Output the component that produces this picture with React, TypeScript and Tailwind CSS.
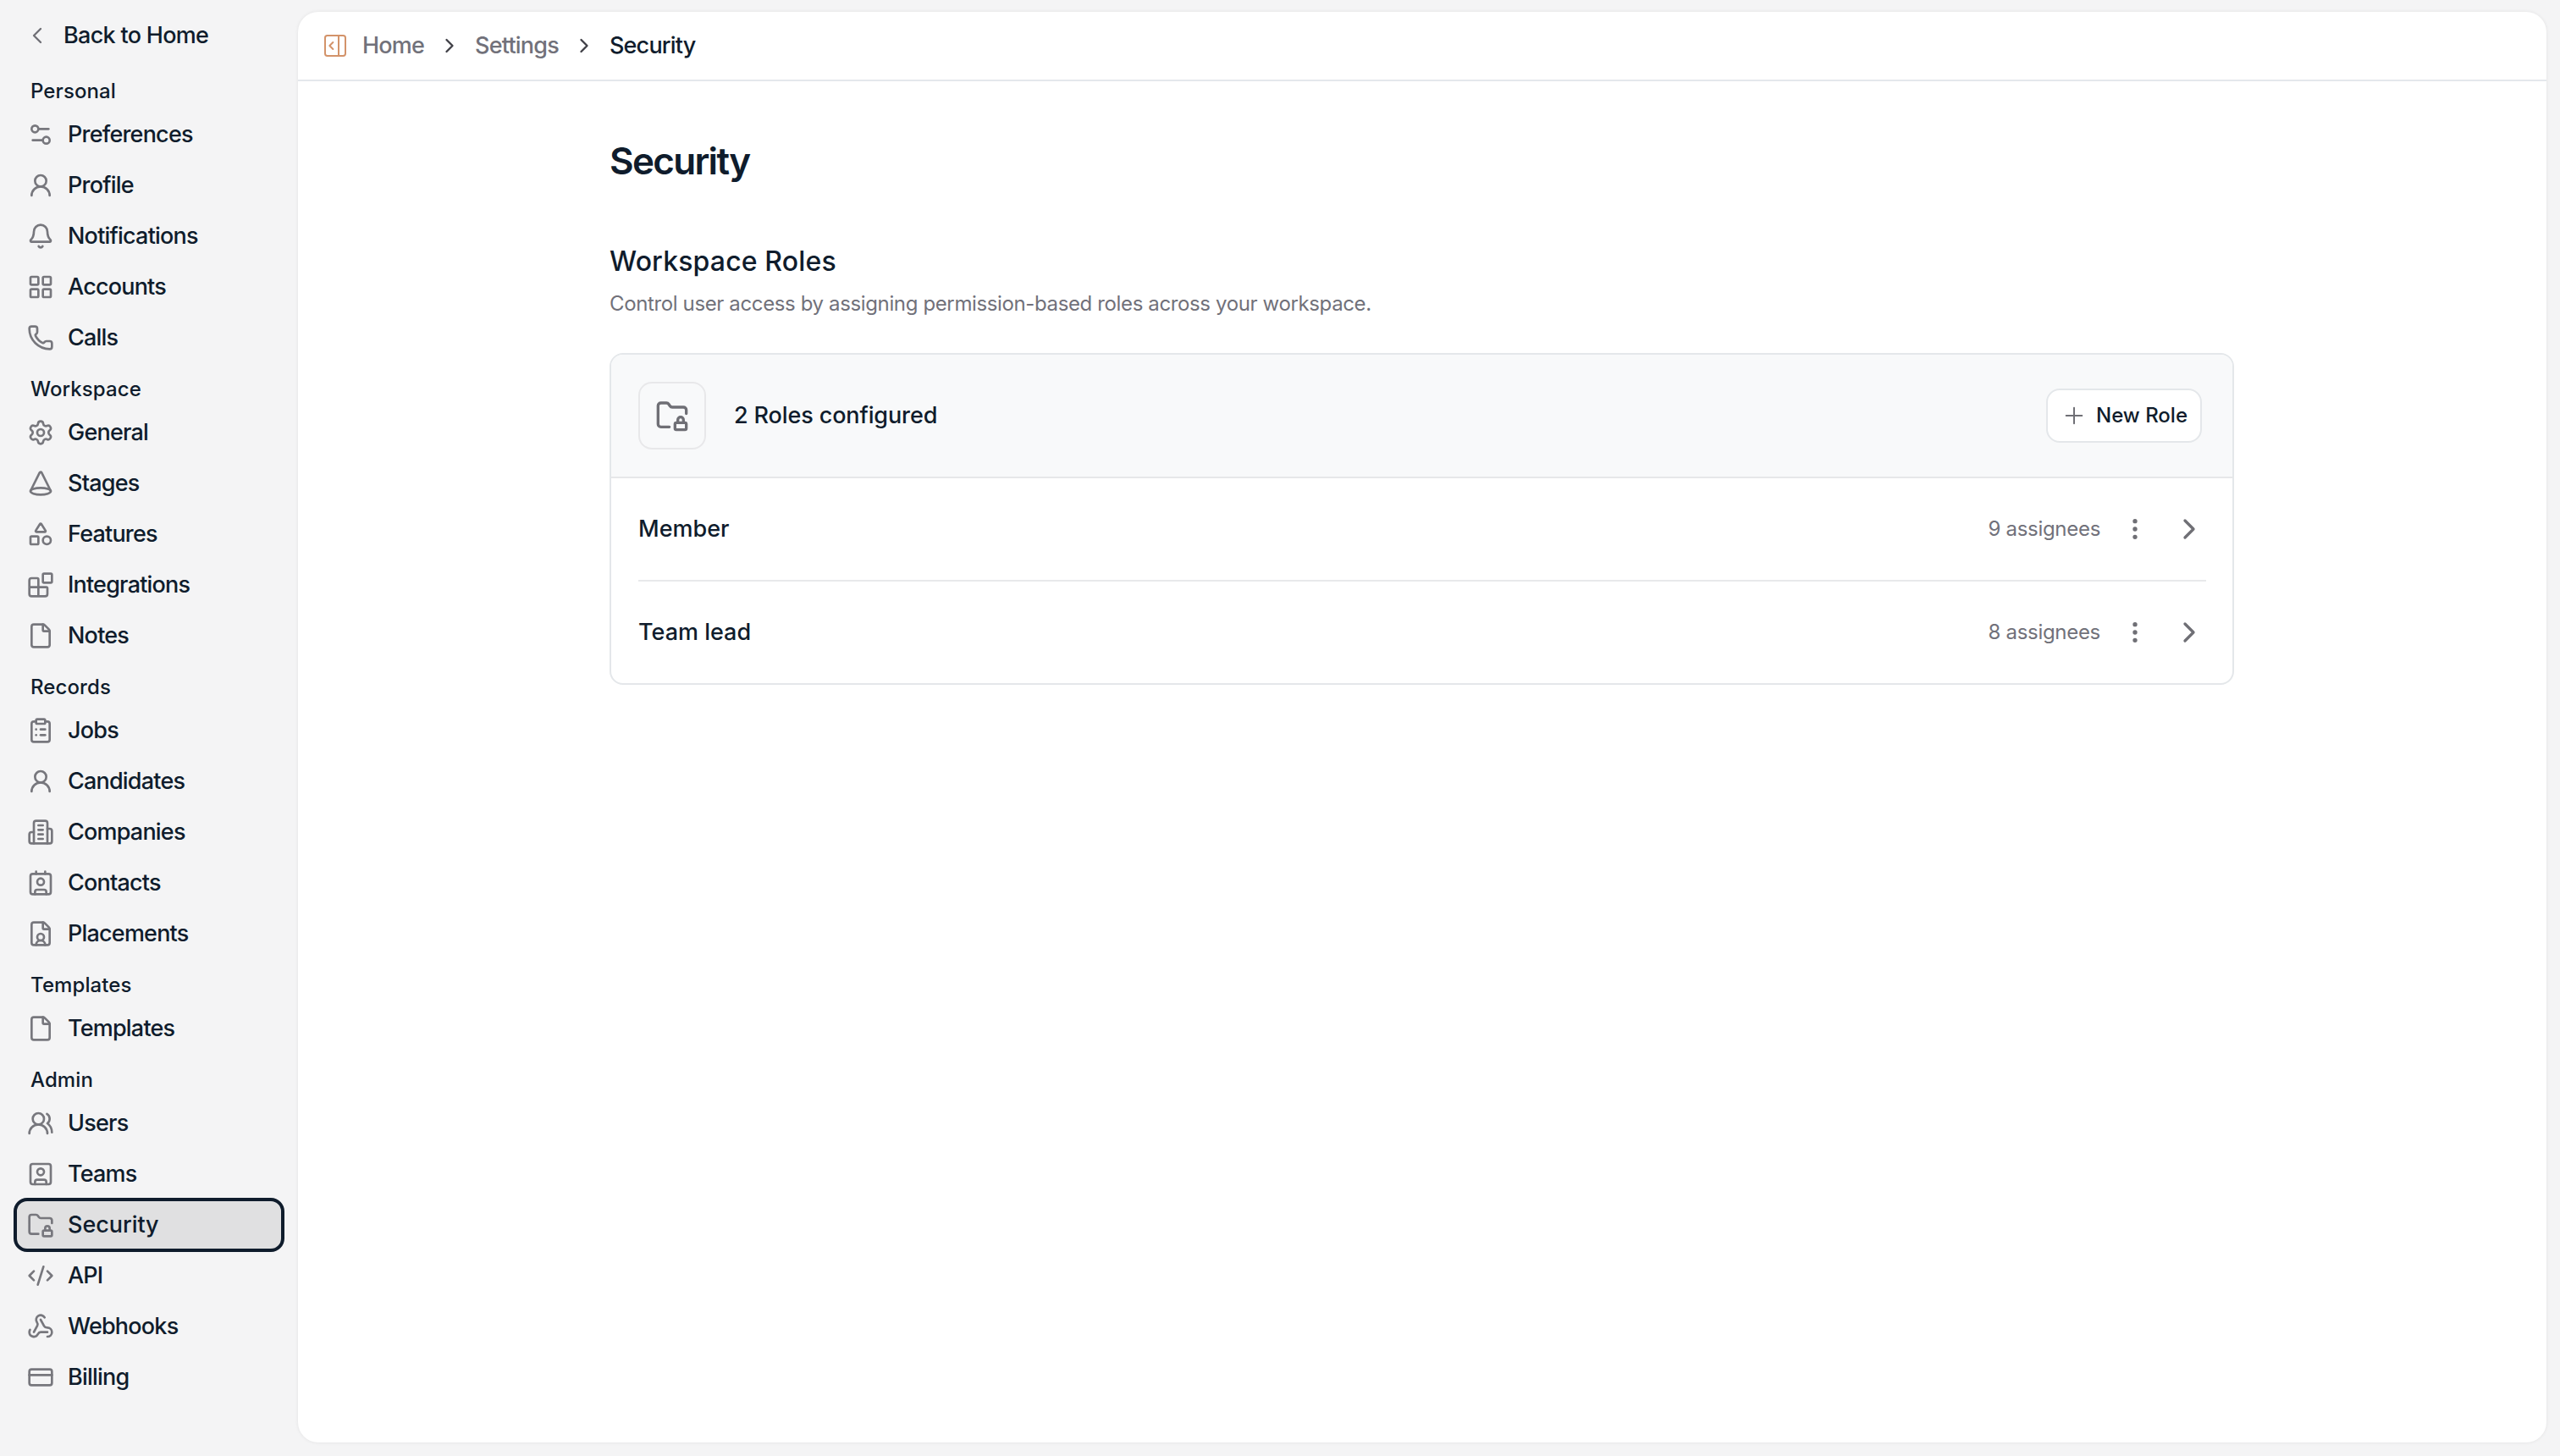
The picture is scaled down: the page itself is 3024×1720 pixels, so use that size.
import React from "react";
import {
  ChevronLeft, ChevronRight, Settings2, UserRound, Bell, LayoutGrid, Phone, Settings, Cone, Shapes, Blocks, File,
  ClipboardList, Contact, FileUser, UsersRound, SquareUser, FolderLock, CodeXml, Webhook, CreditCard,
  PanelRightOpen, Plus, EllipsisVertical,
} from "lucide-react";

const CompanyIcon = (p: { className?: string }) => (
  <svg viewBox="0 0 24 24" fill="none" stroke="currentColor" strokeWidth={2} strokeLinecap="round" strokeLinejoin="round" className={p.className}>
    <path d="M6 22V4a2 2 0 0 1 2-2h8a2 2 0 0 1 2 2v18Z" />
    <path d="M6 12H4a2 2 0 0 0-2 2v6a2 2 0 0 0 2 2h2" />
    <path d="M18 9h2a2 2 0 0 1 2 2v9a2 2 0 0 1-2 2h-2" />
    <path d="M10 6h4M10 10h4M10 14h4M10 18h4" />
  </svg>
);

type Item = { label: string; icon: React.ComponentType<{ className?: string }>; active?: boolean };
const sections: { title: string; items: Item[] }[] = [
  { title: "Personal", items: [
    { label: "Preferences", icon: Settings2 }, { label: "Profile", icon: UserRound }, { label: "Notifications", icon: Bell },
    { label: "Accounts", icon: LayoutGrid }, { label: "Calls", icon: Phone } ] },
  { title: "Workspace", items: [
    { label: "General", icon: Settings }, { label: "Stages", icon: Cone }, { label: "Features", icon: Shapes },
    { label: "Integrations", icon: Blocks }, { label: "Notes", icon: File } ] },
  { title: "Records", items: [
    { label: "Jobs", icon: ClipboardList }, { label: "Candidates", icon: UserRound }, { label: "Companies", icon: CompanyIcon },
    { label: "Contacts", icon: Contact }, { label: "Placements", icon: FileUser } ] },
  { title: "Templates", items: [{ label: "Templates", icon: File }] },
  { title: "Admin", items: [
    { label: "Users", icon: UsersRound }, { label: "Teams", icon: SquareUser }, { label: "Security", icon: FolderLock, active: true },
    { label: "API", icon: CodeXml }, { label: "Webhooks", icon: Webhook }, { label: "Billing", icon: CreditCard } ] },
];

const Role = ({ name, count, divider }: { name: string; count: string; divider?: boolean }) => (
  <div className={`flex items-center justify-between ${divider ? "h-[122px] border-b-2 border-[#e8e9eb]" : "h-[120px]"}`}>
    <span className="text-[27px] font-medium">{name}</span>
    <div className="flex items-center">
      <span className="text-[24px] tracking-[-0.3px] text-[#71717a]">{count}</span>
      <EllipsisVertical className="ml-[25px] h-8 w-8 text-[#6f6f75]" />
      <ChevronRight className="ml-[28px] h-10 w-10 text-[#6f6f75]" />
    </div>
  </div>
);

export default function App() {
  return (
    <div className="flex h-[1720px] w-[3024px] overflow-hidden bg-[#f4f4f5] text-[#0f1c2c] font-['Inter',sans-serif]">
      <aside className="w-[352px] shrink-0 pt-[12px]">
        <div className="mx-[18px] flex h-[60px] items-center pl-[10px]">
          <ChevronLeft className="h-8 w-8 stroke-[1.75] text-[#6f6f75]" />
          <span className="ml-[15px] text-[27px] font-[450] tracking-[-0.7px]">Back to Home</span>
        </div>
        <nav className="mt-[15px]">
          {sections.map((s) => (
            <div key={s.title} className="mt-[10px]">
              <div className="flex h-[42px] items-center pl-[36px] text-[24px] font-medium tracking-[0.1px]">{s.title}</div>
              {s.items.map((it) => (
                <div
                  key={it.label}
                  className={`mx-[18px] flex h-[60px] items-center gap-4 rounded-[14px] pl-[14px] ${it.active ? "bg-[#e0e0e1] outline-4 -outline-offset-2 outline-[#0f1c2c]" : ""}`}
                >
                  <it.icon className="h-8 w-8 shrink-0 text-[#77777d]" />
                  <span className={`text-[27px] ${it.active ? "font-medium tracking-[-0.05px]" : "font-[450] tracking-[-0.8px]"}`}>{it.label}</span>
                </div>
              ))}
            </div>
          ))}
        </nav>
      </aside>

      <main className="mb-[16px] mr-[16px] mt-[14px] flex-1 rounded-[24px] bg-white shadow-[0_0_4px_rgba(0,0,0,0.08)]">
        <header className="flex h-[82px] items-center border-b-2 border-[#e4e8ec] pl-[28px] text-[27px] font-[450] tracking-[-0.8px]">
          <PanelRightOpen className="h-8 w-8 stroke-[1.5] text-[#d3936a]" />
          <span className="ml-[16px] text-[#71717a]">Home</span>
          <ChevronRight className="mx-[16px] h-7 w-7 text-[#3f3f46]" />
          <span className="text-[#71717a]">Settings</span>
          <ChevronRight className="mx-[16px] h-7 w-7 text-[#3f3f46]" />
          <span>Security</span>
        </header>

        <section className="ml-[368px] w-[1919px] pt-[62px]">
          <h1 className="text-[44px] leading-[64px] font-semibold tracking-[-1.7px]">Security</h1>
          <h2 className="mt-[65px] text-[32px] leading-[44px] font-[550] tracking-[0.15px]">Workspace Roles</h2>
          <p className="mt-[10px] text-[24px] leading-[36px] tracking-[-0.37px] text-[#71717a]">
            Control user access by assigning permission-based roles across your workspace.
          </p>

          <div className="mt-[40px] overflow-hidden rounded-[16px] border-2 border-[#e4e7ea]">
            <div className="flex h-[146px] items-center justify-between border-b-2 border-[#e6e7e9] bg-[#f8f9fa] pl-[32px] pr-[36px]">
              <div className="flex items-center">
                <div className="flex h-[80px] w-[80px] items-center justify-center rounded-[16px] border-2 border-[#e8e8ea]">
                  <FolderLock className="h-10 w-10 text-[#6f6f75]" />
                </div>
                <span className="ml-[33px] text-[27px] font-medium tracking-[-0.12px]">2 Roles configured</span>
              </div>
              <button className="flex h-[64px] w-[184px] items-center justify-center gap-[10px] rounded-[16px] border-2 border-[#e4e7ea] bg-white text-[24px] font-medium">
                <Plus className="h-8 w-8 stroke-[1.5] text-[#6f6f75]" />
                New Role
              </button>
            </div>
            <div className="pl-[32px] pr-[31px]">
              <Role name="Member" count="9 assignees" divider />
              <Role name="Team lead" count="8 assignees" />
            </div>
          </div>
        </section>
      </main>
    </div>
  );
}
